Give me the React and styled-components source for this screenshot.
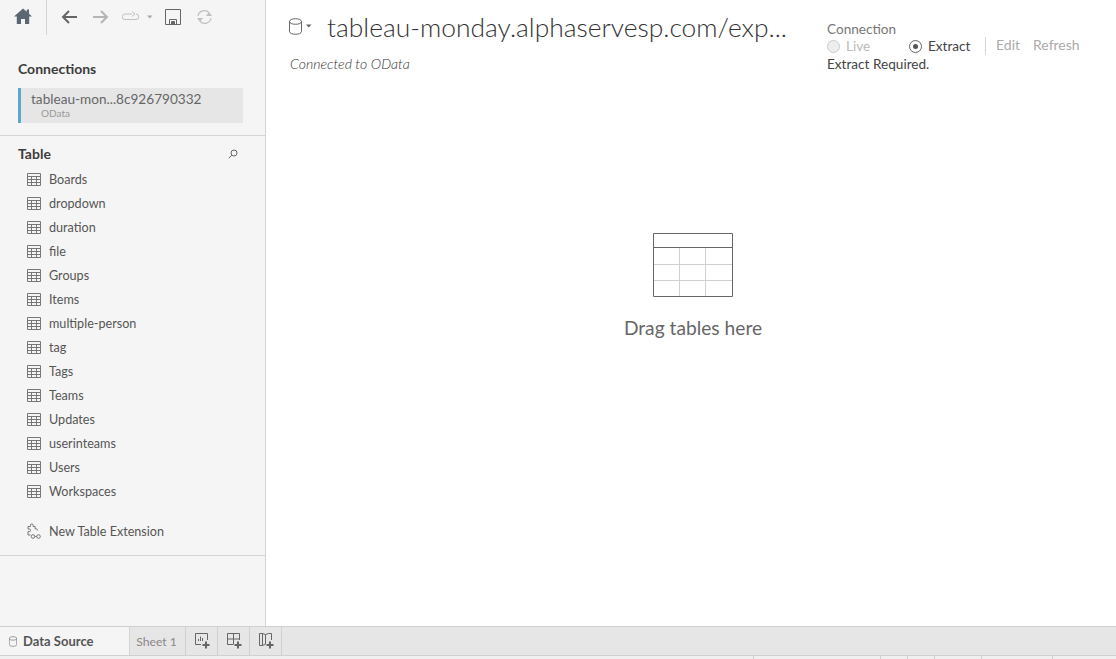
import styled, { createGlobalStyle } from 'styled-components'

const GlobalStyle = createGlobalStyle`
  html, body {
    margin: 0;
    padding: 0;
    height: 100%;
    overflow: hidden;
    background: #fff;
  }
  body {
    font-family: Lato, "Open Sans", "Liberation Sans", sans-serif;
    color: #333;
  }
`

const Page = styled.div`
  width: 1116px;
  height: 659px;
  display: flex;
  flex-direction: column;
`
const Body = styled.div`
  flex: 1;
  display: flex;
  min-height: 0;
`
const Sidebar = styled.aside`
  width: 266px;
  box-sizing: border-box;
  flex-shrink: 0;
  background: #f5f5f5;
  border-right: 1px solid #d4d4d4;
  display: flex;
  flex-direction: column;
`
const Toolbar = styled.div`
  height: 36px;
  display: flex;
  align-items: flex-start;
`
const HomeCell = styled.div`
  width: 46px;
  height: 27px;
  padding-top: 8px;
  border-right: 1px solid #d4d4d4;
  display: flex;
  justify-content: center;
`
const ToolIcons = styled.div`
  display: flex;
  align-items: center;
  height: 34px;
  padding-left: 14px;
`
const ToolIcon = styled.svg`
  display: block;
  flex-shrink: 0;
  margin-right: ${props => props.$gap || 0}px;
`
const ConnectionsSection = styled.section`
  padding: 24px 22px 12px 18px;
  border-bottom: 1px solid #d4d4d4;
`
const SectionTitle = styled.h2`
  margin: 0;
  font-size: 14px;
  line-height: 17px;
  font-weight: 700;
  color: #3c3c3c;
`
const ConnectionCard = styled.div`
  margin-top: 11px;
  height: 35px;
  background: #e6e6e6;
  border-left: 3px solid #5ba7cf;
  padding-left: 10px;
  box-sizing: border-box;
`
const ConnectionName = styled.div`
  font-size: 13.6px;
  line-height: 16px;
  padding-top: 3px;
  color: #666;
`
const ConnectionType = styled.div`
  font-size: 10px;
  line-height: 12px;
  padding-left: 10px;
  color: #999;
`
const TablesSection = styled.section`
  padding: 9px 0 12px 0;
  border-bottom: 1px solid #d4d4d4;
`
const TableHeader = styled.div`
  display: flex;
  justify-content: space-between;
  align-items: center;
  padding: 0 27px 0 18px;
  margin-bottom: 5px;
`
const TableList = styled.ul`
  list-style: none;
  margin: 0;
  padding: 0;
`
const TableRow = styled.li`
  height: 24px;
  display: flex;
  align-items: center;
  gap: 8px;
  padding-left: 27px;
  font-size: 12.6px;
  color: #555;
`
const ExtensionRow = styled(TableRow)`
  margin-top: 16px;
`
const Main = styled.main`
  flex: 1;
  min-width: 0;
  display: flex;
  flex-direction: column;
  background: #fff;
`
const Header = styled.header`
  display: flex;
  justify-content: space-between;
  height: 78px;
`
const HeaderLeft = styled.div`
  padding: 11px 0 0 23px;
`
const TitleRow = styled.div`
  display: flex;
  align-items: center;
  height: 32px;
`
const DbButton = styled.div`
  width: 38px;
  margin-bottom: 2px;
  display: flex;
  align-items: center;
  gap: 4px;
`
const Title = styled.h1`
  margin: 0;
  font-size: 26.4px;
  font-weight: 300;
  line-height: 30px;
  color: #333;
  white-space: nowrap;
`
const ConnectedTo = styled.div`
  margin-top: 13px;
  padding-left: 1px;
  font-size: 14.1px;
  line-height: 16px;
  font-style: italic;
  font-weight: 300;
  color: #333;
`
const ConnectionPanel = styled.div`
  width: 289px;
  padding-top: 21px;
  font-size: 13.6px;
`
const PanelLabel = styled.div`
  line-height: 16px;
  font-size: 13.6px;
  color: #777;
`
const PanelRow = styled.div`
  display: flex;
  align-items: center;
  height: 18px;
`
const RadioLabel = styled.label`
  display: flex;
  align-items: center;
  gap: 6px;
  width: ${props => props.$width}px;
  color: ${props => (props.$disabled ? '#bbb' : '#444')};
`
const Radio = styled.span`
  width: 13px;
  height: 13px;
  box-sizing: border-box;
  border-radius: 50%;
  border: 1px solid ${props => (props.$disabled ? '#ccc' : '#666')};
  background: ${props => (props.$disabled ? '#eee' : '#fff')};
  display: flex;
  align-items: center;
  justify-content: center;
  &::after {
    content: '';
    width: 5px;
    height: 5px;
    border-radius: 50%;
    background: ${props => (props.$disabled ? 'transparent' : '#555')};
  }
`
const PanelDivider = styled.span`
  width: 1px;
  height: 18px;
  background: #d4d4d4;
  margin-right: 10px;
`
const PanelAction = styled.span`
  color: #aaa;
  margin: 0 13px 4px 0;
  font-size: 14px;
`
const PanelStatus = styled.div`
  line-height: 18px;
  color: #444;
`
const DropZone = styled.div`
  flex: 1;
  display: flex;
  flex-direction: column;
  align-items: center;
  padding: 155px 0 0 4px;
`
const DropText = styled.div`
  margin-top: 19px;
  font-size: 19.2px;
  line-height: 24px;
  color: #666;
`
const TabBar = styled.footer`
  height: 30px;
  box-sizing: border-box;
  display: flex;
  background: #e6e6e6;
  border-top: 1px solid #d0d0d0;
  border-bottom: 1px solid #d0d0d0;
  flex-shrink: 0;
`
const DataSourceTab = styled.div`
  width: 130px;
  display: flex;
  align-items: center;
  gap: 6px;
  padding-left: 9px;
  box-sizing: border-box;
  background: #f5f5f5;
  border-right: 1px solid #d4d4d4;
  font-size: 13px;
  font-weight: 700;
  color: #555;
`
const SheetTab = styled.div`
  width: 56px;
  box-sizing: border-box;
  display: flex;
  align-items: center;
  justify-content: center;
  padding-right: 2px;
  border-right: 1px solid #d0d0d0;
  font-size: 12.2px;
  color: #888;
`
const AddTab = styled.div`
  width: 32px;
  box-sizing: border-box;
  display: flex;
  align-items: center;
  justify-content: center;
  padding-left: 2px;
  border-right: 1px solid #d0d0d0;
`
const StatusBar = styled.div`
  height: 3px;
  background: #f0f0f0;
  display: flex;
  padding-left: 753px;
  flex-shrink: 0;
`
const StatusCell = styled.span`
  width: ${props => props.$width}px;
  box-sizing: border-box;
  border-left: 1px solid #d0d0d0;
`

const GridIcon = () => (
  <svg width="14" height="13" viewBox="0 0 14 13" fill="none" stroke="#777" strokeWidth="1">
    <path d="M.5.5h13v12H.5zM.5 3.500h13M.5 6.500h13M.5 9.500h13M4.500 3.500v9M9.500 3.500v9" />
  </svg>
)

const SearchIcon = () => (
  <svg width="10" height="10" viewBox="0 0 10 10" fill="none" stroke="#666" strokeWidth="1">
    <circle cx="6" cy="4" r="3" />
    <path d="M3.800 6.200.8 9.200" />
  </svg>
)

// puzzle piece with the two chained links underneath
const ExtensionIcon = () => (
  <svg width="14" height="16" viewBox="0 0 14 16" fill="none" stroke="#777" strokeWidth="1">
    <path d="M1 3.500h2.500V2.200a1.300 1.300 0 0 1 2.600 0v1.300h2v2.300h1.200a1.300 1.300 0 0 1 1 1.700" />
    <path d="M1 3.500V6h1.200a1.300 1.300 0 0 1 0 2.600H1v3.400h2.500" />
    <circle cx="6" cy="13.500" r="1.800" />
    <circle cx="11.500" cy="13.500" r="1.800" />
    <path d="M7.800 13.500h1.900" />
  </svg>
)

const DbIcon = ({ width, height }) => (
  <svg width={width} height={height} viewBox="0 0 13 17" fill="none" stroke="#666" strokeWidth="1">
    <path d="M.5 3.500C.5 -.200 12.500 -.200 12.500 3.500V13.500C12.500 17.200.5 17.200.5 13.500zM.5 3.500C.5 7.200 12.500 7.200 12.500 3.500" />
  </svg>
)

const Plus = () => <path d="M11 8.500v7M7.500 12h7" stroke="#666" strokeWidth="2" fill="none" />

const tables = [
  'Boards',
  'dropdown',
  'duration',
  'file',
  'Groups',
  'Items',
  'multiple-person',
  'tag',
  'Tags',
  'Teams',
  'Updates',
  'userinteams',
  'Users',
  'Workspaces',
]

function App() {
  return (
    <Page>
      <GlobalStyle />
      <Body>
        <Sidebar>
          <Toolbar>
            <HomeCell>
              <svg width="18" height="16" viewBox="0 0 18 16" fill="#5a6672">
                <path d="M9 .5 0 8.500h2.800V16h4.200v-5h4v5h4.200V8.500H18l-3-2.700V1.500h-2.200v2.300z" />
              </svg>
            </HomeCell>
            <ToolIcons>
              <ToolIcon $gap={16} width="16" height="14" viewBox="0 0 16 14" fill="none" stroke="#666" strokeWidth="2">
                <path d="M16 7H2M8 1 2 7l6 6" />
              </ToolIcon>
              <ToolIcon $gap={13} width="16" height="14" viewBox="0 0 16 14" fill="none" stroke="#b5b5b5" strokeWidth="2">
                <path d="M0 7h14M8 1l6 6-6 6" />
              </ToolIcon>
              <ToolIcon $gap={7} width="18" height="12" viewBox="0 0 18 12" fill="none" stroke="#c0c0c0" strokeWidth="1">
                <path d="M10 3H3a2.500 2.500 0 0 0 0 5.500h11a2.500 2.500 0 0 0 0-5.500M10 .5 13 3l-3 2.500" />
              </ToolIcon>
              <ToolIcon $gap={12} width="6" height="4" viewBox="0 0 6 4" fill="#aaa">
                <path d="M0 .5h5.500L2.800 3.500z" />
              </ToolIcon>
              <ToolIcon $gap={15} width="16" height="16" viewBox="0 0 16 16" fill="none" stroke="#666" strokeWidth="1">
                <path d="M.5.500h15v15H.5z" />
                <path d="M4.500 15.500V10.500h7v5" />
                <path d="M6.500 12.500h3v3h-3z" fill="#666" />
              </ToolIcon>
              <ToolIcon width="17" height="16" viewBox="0 0 17 16" fill="none" stroke="#c0c0c0" strokeWidth="1.200">
                <path d="M2 7a6.500 6.500 0 0 1 11-3.500" />
                <path d="M15 9a6.500 6.500 0 0 1-11 3.500" />
                <path d="M16 7h-6l3-4zM1 9h6l-3 4z" fill="#c0c0c0" stroke="none" />
              </ToolIcon>
            </ToolIcons>
          </Toolbar>

          <ConnectionsSection>
            <SectionTitle>Connections</SectionTitle>
            <ConnectionCard>
              <ConnectionName>tableau-mon...8c926790332</ConnectionName>
              <ConnectionType>OData</ConnectionType>
            </ConnectionCard>
          </ConnectionsSection>

          <TablesSection>
            <TableHeader>
              <SectionTitle>Table</SectionTitle>
              <SearchIcon />
            </TableHeader>
            <TableList>
              {tables.map(name => (
                <TableRow key={name}>
                  <GridIcon />
                  {name}
                </TableRow>
              ))}
              <ExtensionRow>
                <ExtensionIcon />
                New Table Extension
              </ExtensionRow>
            </TableList>
          </TablesSection>
        </Sidebar>

        <Main>
          <Header>
            <HeaderLeft>
              <TitleRow>
                <DbButton>
                  <DbIcon width={13} height={17} />
                  <svg width="6" height="4" viewBox="0 0 6 4" fill="#666">
                    <path d="M0 .5h5.500L2.800 3.500z" />
                  </svg>
                </DbButton>
                <Title>tableau-monday.alphaservesp.com/exp...</Title>
              </TitleRow>
              <ConnectedTo>Connected to OData</ConnectedTo>
            </HeaderLeft>
            <ConnectionPanel>
              <PanelLabel>Connection</PanelLabel>
              <PanelRow>
                <RadioLabel $disabled $width={82}>
                  <Radio $disabled />
                  Live
                </RadioLabel>
                <RadioLabel $width={76}>
                  <Radio />
                  Extract
                </RadioLabel>
                <PanelDivider />
                <PanelAction>Edit</PanelAction>
                <PanelAction>Refresh</PanelAction>
              </PanelRow>
              <PanelStatus>Extract Required.</PanelStatus>
            </ConnectionPanel>
          </Header>

          <DropZone>
            <svg width="80" height="64" viewBox="0 0 80 64" fill="none">
              <path d="M26.500 15v48M52.500 15v48M1 31.500h78M1 47.500h78" stroke="#d0d0d0" />
              <path d="M.5.500h79v63H.5zM.5 14.500h79" stroke="#666" />
            </svg>
            <DropText>Drag tables here</DropText>
          </DropZone>
        </Main>
      </Body>

      <TabBar>
        <DataSourceTab>
          <DbIcon width={8} height={11} />
          Data Source
        </DataSourceTab>
        <SheetTab>Sheet 1</SheetTab>
        <AddTab>
          <svg width="16" height="16" viewBox="0 0 16 16" fill="none" stroke="#666">
            <path d="M6 11.500H.5V.5h12V7" />
            <path d="M3.500 8V6M5.500 8V3.500M7.500 8V5" />
            <Plus />
          </svg>
        </AddTab>
        <AddTab>
          <svg width="16" height="16" viewBox="0 0 16 16" fill="none" stroke="#666">
            <path d="M6 11.500H.5V.5h12V7M.5 6h12M6.500.5v11" />
            <Plus />
          </svg>
        </AddTab>
        <AddTab>
          <svg width="16" height="16" viewBox="0 0 16 16" fill="none" stroke="#666">
            <path d="M6 11.500 3 12.500H.5V.5h3l3 1 3-1h3V7M3.500.5v12M6.500 1.500v10" />
            <Plus />
          </svg>
        </AddTab>
      </TabBar>
      <StatusBar>
        <StatusCell $width={127} />
        <StatusCell $width={27} />
        <StatusCell $width={27} />
        <StatusCell $width={47} />
        <StatusCell $width={71} />
        <StatusCell $width={64} />
      </StatusBar>
    </Page>
  )
}

export default App
